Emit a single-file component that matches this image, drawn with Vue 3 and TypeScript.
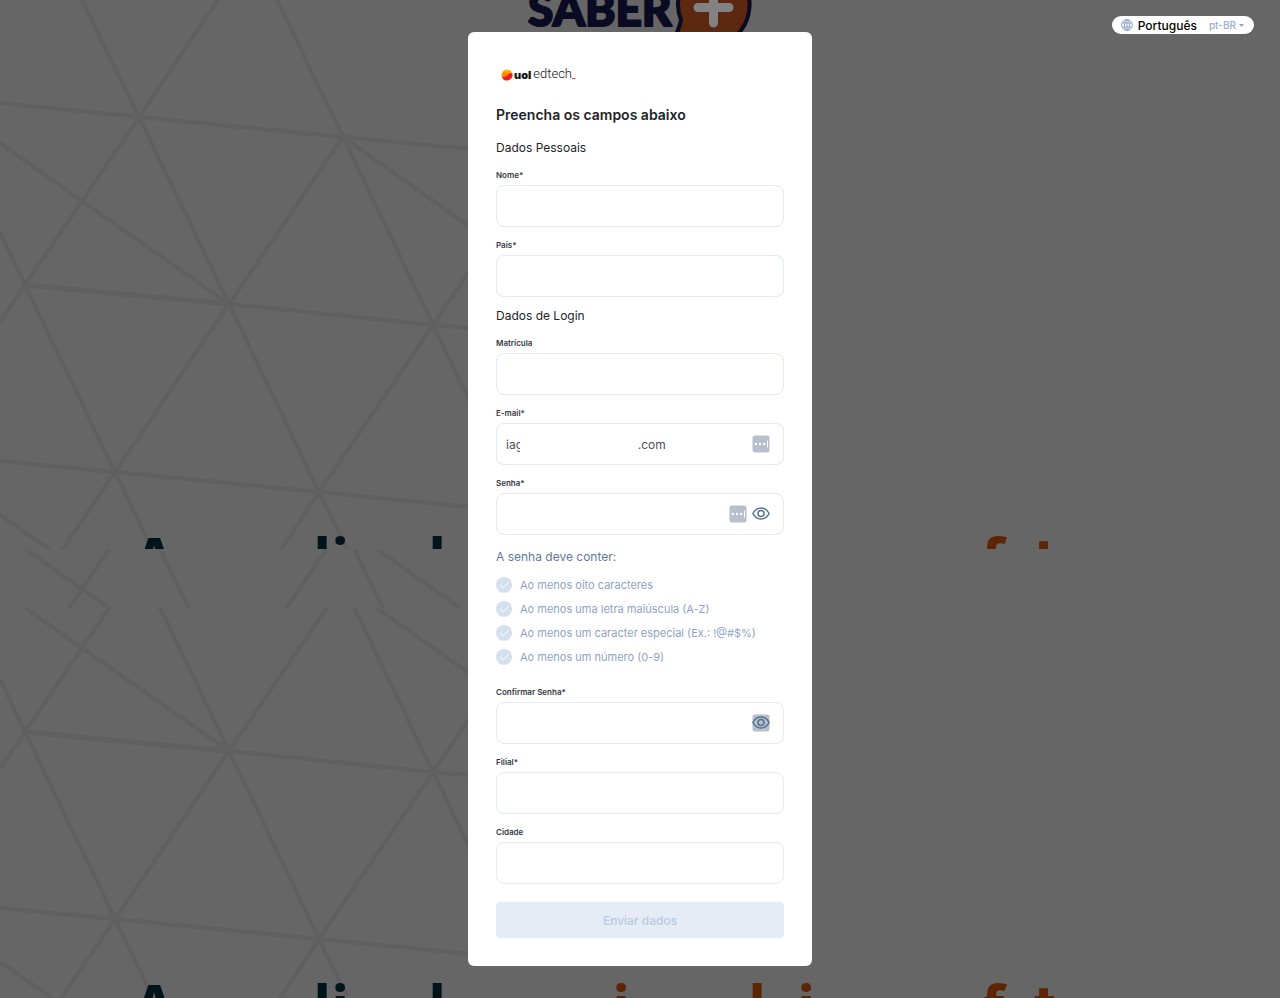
<script setup lang="ts">
import { reactive, ref } from 'vue'

interface Field {
  id: string
  label: string
  type?: string
}

interface Letter {
  x: number
  char: string
  warm?: boolean
  flat?: boolean
}

const form = reactive<Record<string, string>>({
  nome: '',
  pais: '',
  matricula: '',
  email: 'iag' + '\u00a0'.repeat(34) + '.com',
  senha: '',
  confirmar: '',
  filial: '',
  cidade: '',
})

const personal: Field[] = [
  { id: 'nome', label: 'Nome*' },
  { id: 'pais', label: 'País*' },
]

const extra: Field[] = [
  { id: 'filial', label: 'Filial*' },
  { id: 'cidade', label: 'Cidade' },
]

const rules: string[] = [
  'Ao menos oito caracteres',
  'Ao menos uma letra maiúscula (A-Z)',
  'Ao menos um caracter especial (Ex.: !@#$%)',
  'Ao menos um número (0-9)',
]

const upperLetters: Letter[] = [
  { x: 132, char: 'A', flat: true },
  { x: 313, char: 'l' },
  { x: 331, char: 'i' },
  { x: 428, char: 'l' },
  { x: 981, char: 'f', warm: true },
  { x: 1034, char: 't', warm: true, flat: true },
]

const lowerLetters: Letter[] = [
  ...upperLetters,
  { x: 612, char: 'i', warm: true },
  { x: 748, char: 'l', warm: true },
  { x: 797, char: 'i', warm: true },
]

const showPassword = ref(false)
const showConfirm = ref(false)
</script>

<template>
  <div class="page">
    <svg class="backdrop" viewBox="0 0 1280 998" preserveAspectRatio="xMidYMin slice" aria-hidden="true">
      <defs>
        <g id="mesh" fill="none" stroke="#606060" stroke-width="4">
          <path d="M0 103 139 117 343 137 480 150" />
          <path d="M82 0 139 117 229 304 319 492 347 549" />
          <path d="M218 0 139 117 25 285 0 322" />
          <path d="M277 0 343 137 433 325 480 423" />
          <path d="M0 143 82 201 229 304" />
          <path d="M343 137 480 234" />
          <path d="M229 304 433 325 480 329" />
          <path d="M25 285 229 304" stroke-width="5" />
          <path d="M343 137 229 304 115 472 60 553" />
          <path d="M480 256 433 325 319 492 279 553" />
          <path d="M0 232 25 285 115 472 152 549" />
          <path d="M0 461 115 472 319 492 480 508" />
          <path d="M0 515 52 551" />
        </g>
        <clipPath id="band-top"><rect width="1280" height="549" /></clipPath>
        <clipPath id="band-middle"><rect y="549" width="1280" height="59" /></clipPath>
        <clipPath id="band-bottom"><rect y="608" width="1280" height="390" /></clipPath>
      </defs>
      <g clip-path="url(#band-top)">
        <use href="#mesh" />
        <text
          v-for="l in upperLetters"
          :key="l.x"
          :x="l.x"
          y="582"
          class="headline"
          :class="{ warm: l.warm, flat: l.flat }"
        >{{ l.char }}</text>
      </g>
      <g clip-path="url(#band-middle)"><use href="#mesh" y="388" /></g>
      <g clip-path="url(#band-bottom)">
        <use href="#mesh" y="447" />
        <text
          v-for="l in lowerLetters"
          :key="l.x"
          :x="l.x"
          y="1029"
          class="headline"
          :class="{ warm: l.warm, flat: l.flat }"
        >{{ l.char }}</text>
      </g>
      <text x="528" y="26" class="brand">SABER</text>
      <path
        d="M673 40 Q679 30 681 20 Q675 5 681 -12 A36 36 0 0 1 747 -14 Q753 8 745 24 Q737 40 720 46Z"
        fill="#5c2810"
        stroke="#0a0a22"
        stroke-width="4"
      />
      <path d="M713.5 -9V23M698 7.500H729" stroke="#828282" stroke-width="9" stroke-linecap="round" />
    </svg>

    <button class="lang" type="button" aria-haspopup="listbox">
      <svg width="12" height="12" viewBox="0 0 12 12" fill="none" stroke="#8fa2ca" aria-hidden="true">
        <circle cx="6" cy="6" r="5.4" />
        <ellipse cx="6" cy="6" rx="2.5" ry="5.4" />
        <path d="M6 .6v10.8M1.200 4h9.600M1.200 8h9.600" />
      </svg>
      <span class="lang-name">Português</span>
      <span class="lang-code">pt-BR</span>
      <svg width="5" height="3" viewBox="0 0 5 3" aria-hidden="true"><path d="M0 0h5L2.500 3z" fill="#8fa2ca" /></svg>
    </button>

    <main class="modal">
      <div class="logo">
        <svg width="12" height="12" viewBox="0 0 12 12" aria-hidden="true">
          <circle cx="6" cy="6" r="5.500" fill="#ffb300" />
          <path d="M1 8.200A5.500 5.500 0 0 0 11.300 4.500C9.500 4 7.800 4 7.100 5.100 6.300 7 3 7.900 1 8.200z" fill="#ee1c25" />
          <path d="M1 8.200C.2 5 1.900 3.300 4.700 3.300c1.700 0 2.500.8 2.400 1.800C6.300 7 3 7.900 1 8.200z" fill="#ff8a00" />
        </svg>
        <span class="logo-uol">uol</span><span class="logo-ed">edtech<span class="logo-dash">_</span></span>
      </div>

      <form @submit.prevent>
        <h1>Preencha os campos abaixo</h1>

        <h2>Dados Pessoais</h2>
        <div v-for="f in personal" :key="f.id" class="field">
          <label :for="f.id">{{ f.label }}</label>
          <input :id="f.id" v-model="form[f.id]" type="text" />
        </div>

        <h2>Dados de Login</h2>
        <div class="field">
          <label for="matricula">Matrícula</label>
          <input id="matricula" v-model="form.matricula" type="text" />
        </div>
        <div class="field">
          <label for="email">E-mail*</label>
          <div class="control">
            <input id="email" v-model="form.email" type="text" inputmode="email" />
            <span class="cover"></span>
            <div class="tools">
              <svg class="vault" viewBox="0 0 18 18" aria-hidden="true">
                <rect x=".5" y=".5" width="17" height="17" rx="2.500" fill="#b8bfcc" />
                <g fill="#fff"><circle cx="3.800" cy="9" r="1.200" /><circle cx="8" cy="9" r="1.200" /><circle cx="12.200" cy="9" r="1.200" /><rect x="15" y="5.500" width="1" height="7" /></g>
              </svg>
            </div>
          </div>
        </div>
        <div class="field">
          <label for="senha">Senha*</label>
          <div class="control">
            <input id="senha" v-model="form.senha" :type="showPassword ? 'text' : 'password'" />
            <div class="tools">
              <svg class="vault" viewBox="0 0 18 18" aria-hidden="true">
                <rect x=".5" y=".5" width="17" height="17" rx="2.500" fill="#b8bfcc" />
                <g fill="#fff"><circle cx="3.800" cy="9" r="1.200" /><circle cx="8" cy="9" r="1.200" /><circle cx="12.200" cy="9" r="1.200" /><rect x="15" y="5.500" width="1" height="7" /></g>
              </svg>
              <button class="eye" type="button" aria-label="Mostrar senha" @click="showPassword = !showPassword">
                <svg viewBox="0 0 18 18" fill="none" stroke="#56718f" stroke-width="1.500" aria-hidden="true">
                  <path d="M.9 8.500C2.700 5 5.500 3 9 3s6.300 2 8.100 5.500C15.300 12 12.500 14 9 14S2.700 12 .9 8.500z" />
                  <circle cx="9" cy="8.500" r="3" />
                </svg>
              </button>
            </div>
          </div>
        </div>

        <p class="hint">A senha deve conter:</p>
        <ul class="rules">
          <li v-for="r in rules" :key="r">
            <svg width="16" height="16" viewBox="0 0 16 16" fill="none" aria-hidden="true">
              <circle cx="8" cy="8" r="8" fill="#d5e0ef" />
              <path d="M4 8.200 7 11l5.300-5.600" stroke="#fff" />
            </svg>
            <span>{{ r }}</span>
          </li>
        </ul>

        <div class="field">
          <label for="confirmar">Confirmar Senha*</label>
          <div class="control">
            <input id="confirmar" v-model="form.confirmar" :type="showConfirm ? 'text' : 'password'" />
            <div class="tools">
              <button class="eye" type="button" aria-label="Mostrar confirmação" @click="showConfirm = !showConfirm">
                <svg viewBox="0 0 18 18" fill="none" stroke="#56718f" stroke-width="1.500" aria-hidden="true">
                  <rect x=".5" y=".5" width="17" height="17" rx="2.500" fill="#b8bfcc" stroke="none" />
                  <path d="M.9 8.500C2.700 5 5.500 3 9 3s6.300 2 8.100 5.500C15.300 12 12.500 14 9 14S2.700 12 .9 8.500z" />
                  <circle cx="9" cy="8.500" r="3" />
                </svg>
              </button>
            </div>
          </div>
        </div>
        <div v-for="f in extra" :key="f.id" class="field">
          <label :for="f.id">{{ f.label }}</label>
          <input :id="f.id" v-model="form[f.id]" type="text" />
        </div>

        <button class="submit" type="submit" disabled>Enviar dados</button>
      </form>
    </main>
  </div>
</template>

<style>
body {
  background: #666;
}
</style>

<style scoped>
.page {
  position: relative;
  display: flex;
  justify-content: center;
  align-items: flex-start;
  min-height: 100vh;
  box-sizing: border-box;
  padding: 32px 16px;
  overflow: hidden;
  background: #666;
  font-family: Inter, "Liberation Sans", sans-serif;
  color: #212529;
}

.backdrop {
  position: absolute;
  inset: 0;
  width: 100%;
  height: 100%;
}

.headline {
  font: 700 60px "Open Sans", sans-serif;
  fill: #00141c;
}

.headline.flat {
  font-family: Inter, sans-serif;
}

.headline.warm {
  fill: #5c2506;
}

.brand {
  font: 900 46px Lato, sans-serif;
  fill: #0a0a22;
  stroke: #0a0a22;
  stroke-width: 2px;
  stroke-linejoin: round;
}

.lang {
  position: absolute;
  top: 16px;
  right: 26px;
  display: flex;
  align-items: center;
  height: 18px;
  padding: 0 10px 0 9px;
  border: 0;
  border-radius: 9px;
  background: #fff;
  font-family: inherit;
}

.lang-name {
  margin: 0 12px 0 5px;
  font-size: 12px;
  font-weight: 500;
  color: #000;
}

.lang-code {
  margin-right: 3px;
  font-size: 10px;
  font-weight: 500;
  color: #9aabd0;
}

.modal {
  position: relative;
  width: 100%;
  max-width: 344px;
  box-sizing: border-box;
  padding: 28px;
  border-radius: 6px;
  background: #fff;
}

.logo {
  display: flex;
  align-items: center;
  height: 30px;
  margin-bottom: 14px;
  padding-left: 5px;
}

.logo-uol {
  margin: 0 2px 0 1px;
  font-size: 11px;
  font-weight: 900;
  line-height: 14px;
  color: #111;
}

.logo-ed {
  font-family: Roboto, sans-serif;
  font-size: 13px;
  font-weight: 300;
  line-height: 14px;
  color: #111;
}

.logo-dash {
  font-size: 8px;
  font-weight: 900;
  color: #f0354b;
}

h1 {
  margin: 0 0 13px;
  font-size: 14px;
  font-weight: 600;
  line-height: 22px;
}

h2 {
  margin: 0 0 11px;
  font-size: 12px;
  font-weight: 400;
  line-height: 18px;
}

.field + h2 {
  margin-top: 10px;
}

.field + .field {
  margin-top: 11px;
}

.field label {
  display: block;
  margin-bottom: 3px;
  font-size: 8px;
  font-weight: 600;
  line-height: 14px;
  color: #33383f;
}

.field input {
  display: block;
  width: 100%;
  height: 42px;
  box-sizing: border-box;
  padding: 0 9px;
  border: 1px solid #e2e9f6;
  border-radius: 8px;
  outline: 0;
  background: #fff;
  font-family: inherit;
  font-size: 12px;
  color: #495057;
}

.control {
  position: relative;
}

.cover {
  position: absolute;
  top: 8px;
  bottom: 8px;
  left: 24px;
  width: 118px;
  background: #fff;
}

.tools {
  position: absolute;
  top: 0;
  right: 14px;
  display: flex;
  align-items: center;
  gap: 5px;
  height: 42px;
}

.vault,
.eye,
.eye svg {
  display: block;
  width: 18px;
  height: 18px;
}

.eye {
  padding: 0;
  border: 0;
  background: none;
}

.hint {
  margin: 13px 0 7px;
  font-size: 12px;
  line-height: 18px;
  color: #5f7a9c;
}

.rules {
  margin: 0 0 16px;
  padding: 0;
  list-style: none;
}

.rules li {
  display: flex;
  align-items: center;
  gap: 8px;
  height: 24px;
  font-size: 11px;
  color: #8fa2c6;
}

.submit {
  display: block;
  width: 100%;
  height: 36px;
  margin-top: 18px;
  border: 0;
  border-radius: 4px;
  background: #e5ecf6;
  font-family: inherit;
  font-size: 12px;
  font-weight: 500;
  color: #bcc8dc;
}
</style>
